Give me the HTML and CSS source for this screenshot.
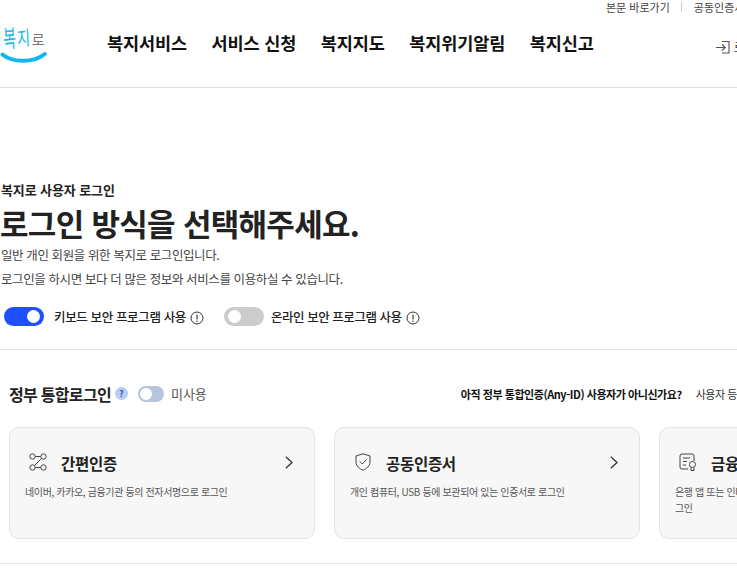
FILE: index.html
```html
<!DOCTYPE html>
<html lang="ko">
<head>
<meta charset="utf-8">
<title>복지로 로그인</title>
<link rel="stylesheet" href="styles.css">
</head>
<body>
<div class="page">
  <header class="header">
    <div class="util">
      <a class="util-link">본문 바로가기</a>
      <span class="util-sep"></span>
      <a class="util-link">공동인증서 관리</a>
    </div>
    <div class="gnb">
      <div class="logo">
        <div class="logo-text"><span class="lg1">복</span><span class="lg2">지</span><span class="lg3">로</span></div>
        <svg class="logo-smile" width="47" height="15" viewBox="0 0 47 15"><path d="M2.500 3.500C12 11.500 33 12.500 44.800 3" fill="none" stroke="#12b7f0" stroke-width="4" stroke-linecap="round"/></svg>
      </div>
      <nav class="nav">
        <a>복지서비스</a><a>서비스 신청</a><a>복지지도</a><a>복지위기알림</a><a>복지신고</a>
      </nav>
      <a class="login">
        <svg width="14" height="14" viewBox="0 0 14 14" fill="none" stroke="#555" stroke-width="1.100"><path d="M0 7.500H9M6 4.500L9.300 7.500L6 10.500M6 1.500H13V13H6"/></svg>
        <span>로그인</span>
      </a>
    </div>
  </header>
  <main class="main">
    <section class="intro">
      <p class="eyebrow">복지로 사용자 로그인</p>
      <h1 class="title">로그인 방식을 선택해주세요.</h1>
      <p class="desc">일반 개인 회원을 위한 복지로 로그인입니다.</p>
      <p class="desc desc-2">로그인을 하시면 보다 더 많은 정보와 서비스를 이용하실 수 있습니다.</p>
      <div class="options">
        <div class="option">
          <span class="switch on"></span><span class="opt-label">키보드 보안 프로그램 사용</span>
          <svg class="info" width="14" height="14" viewBox="0 0 14 14"><circle cx="7" cy="7" r="6" fill="none" stroke="#333"/><path d="M7 3.500V8.500M7 9.500V10.800" stroke="#333" stroke-width="1.100"/></svg>
        </div>
        <div class="option option-2">
          <span class="switch off"></span><span class="opt-label">온라인 보안 프로그램 사용</span>
          <svg class="info" width="14" height="14" viewBox="0 0 14 14"><circle cx="7" cy="7" r="6" fill="none" stroke="#333"/><path d="M7 3.500V8.500M7 9.500V10.800" stroke="#333" stroke-width="1.100"/></svg>
        </div>
      </div>
    </section>
    <section class="gov">
      <div class="gov-head">
        <div class="gov-left">
          <h2 class="gov-title">정부 통합로그인</h2>
          <span class="help">?</span>
          <span class="switch small"></span>
          <span class="unused">미사용</span>
        </div>
        <div class="gov-right">
          <strong>아직 정부 통합인증(Any-ID) 사용자가 아니신가요?</strong>
          <span class="register">사용자 등록하기</span>
        </div>
      </div>
      <div class="cards">
        <article class="card">
          <div class="card-head">
            <svg class="card-icon" width="18" height="18" viewBox="0 0 18 18" fill="none" stroke="#444"><circle cx="3.500" cy="3.500" r="2.700"/><circle cx="14.500" cy="3.500" r="2.700"/><circle cx="3.500" cy="14.500" r="2.700"/><circle cx="14.500" cy="14.500" r="2.700"/><path d="M6.200 3.500H11.800M6.200 14.500H11.800M12.500 5.500L5.500 12.500"/></svg>
            <h3>간편인증</h3>
            <svg class="chev" width="8" height="13" viewBox="0 0 8 13" fill="none" stroke="#333" stroke-width="1.300"><path d="M.8 .8L7 6.500L.8 12.200"/></svg>
          </div>
          <p>네이버, 카카오, 금융기관 등의 전자서명으로 로그인</p>
        </article>
        <article class="card">
          <div class="card-head">
            <svg class="card-icon" width="18" height="18" viewBox="0 0 16 18" fill="none" stroke="#444"><path d="M8 .8L15 3V9C15 13 11.500 15.800 8 17.200C4.500 15.800 1 13 1 9V3Z"/><path d="M4.800 8.500L7.300 11L11.500 6.500"/></svg>
            <h3>공동인증서</h3>
            <svg class="chev" width="8" height="13" viewBox="0 0 8 13" fill="none" stroke="#333" stroke-width="1.300"><path d="M.8 .8L7 6.500L.8 12.200"/></svg>
          </div>
          <p>개인 컴퓨터, USB 등에 보관되어 있는 인증서로 로그인</p>
        </article>
        <article class="card">
          <div class="card-head">
            <svg class="card-icon" width="18" height="18" viewBox="0 0 18 18" fill="none" stroke="#444"><path d="M9 16H3A2 2 0 0 1 1 14V3A2 2 0 0 1 3 1H13A2 2 0 0 1 15 3V8"/><path d="M4 5H11M4 8.500H8M4 12H7"/><circle cx="13.500" cy="11.500" r="3"/><path d="M12 14.500V17.500H15V14.500"/></svg>
            <h3>금융인증서</h3>
            <svg class="chev" width="8" height="13" viewBox="0 0 8 13" fill="none" stroke="#333" stroke-width="1.300"><path d="M.8 .8L7 6.500L.8 12.200"/></svg>
          </div>
          <p>은행 앱 또는 인터넷뱅킹 등에서 발급받은 금융인증서를 이용하여 로그인</p>
        </article>
      </div>
    </section>
    <div class="bottom-rule"></div>
  </main>
</div>
</body>
</html>
```
FILE: styles.css
```css
* { box-sizing: border-box; }
html, body { margin: 0; padding: 0; background: #fff; overflow: hidden; height: 100%; }
body { font-family: "Noto Sans CJK KR", "Noto Sans", sans-serif; color: #222; }
h1, h2, h3, p { margin: 0; }
.page { width: 1000px; }
.header { height: 88px; border-bottom: 1px solid #ddd; display: flex; flex-direction: column; }
.util { display: flex; align-items: center; height: 14px; margin-left: 606px; font-size: 11px; color: #444; white-space: nowrap; }
.util-sep { width: 1px; height: 10px; background: #ccc; margin: 0 12px 0 11px; }
.gnb { display: flex; align-items: flex-start; }
.logo { position: relative; width: 107px; height: 60px; flex: none; }
.logo-text { position: absolute; left: 3px; top: 14px; display: flex; font-size: 14px; line-height: 18px; font-weight: 400; white-space: nowrap; }
.lg1 { color: #12b7f0; transform: scale(1, 1.750) rotate(-4deg); }
.lg2 { color: #12b7f0; transform: scale(1, 1.400) rotate(-4deg); margin-left: 1px; }
.lg3 { color: #777; transform: translateY(2px); margin-left: 2px; }
.logo-smile { position: absolute; left: 0; top: 37px; }
.nav { display: flex; gap: 24.500px; padding-top: 16px; font-size: 17.500px; line-height: 26px; font-weight: 700; color: #111; white-space: nowrap; letter-spacing: -.1px; }
.login { display: flex; align-items: center; gap: 4px; margin-left: 122px; padding-top: 24px; font-size: 12px; color: #333; white-space: nowrap; }
.main { padding-top: 93px; }
.eyebrow { font-size: 13px; line-height: 18px; font-weight: 700; letter-spacing: -.1px; color: #222; padding-left: 1px; }
.title { font-size: 31px; line-height: 40px; font-weight: 700; letter-spacing: -.7px; color: #222; margin-top: 4px; }
.desc { font-size: 12.500px; line-height: 18px; letter-spacing: -.4px; color: #444; margin-top: 3px; padding-left: 1px; }
.desc-2 { margin-top: 6px; }
.options { display: flex; align-items: center; padding: 18px 0 22px 4px; height: 61px; }
.option { display: flex; align-items: center; }
.option-2 { margin-left: 20px; }
.switch { display: block; position: relative; width: 40px; height: 19px; border-radius: 10px; flex: none; }
.switch::after { content: ""; position: absolute; top: 3px; width: 13px; height: 13px; border-radius: 50%; background: #fff; }
.switch.on { background: #1f4fff; }
.switch.on::after { right: 4px; }
.switch.off { background: #ccc; }
.switch.off::after { left: 4px; }
.opt-label { margin-left: 10px; font-size: 12.500px; line-height: 18px; font-weight: 500; letter-spacing: -.36px; color: #222; white-space: nowrap; }
.option-2 .opt-label { margin-left: 7px; letter-spacing: -.45px; }
.info { margin-left: 4px; margin-top: 2px; }
.gov { border-top: 1px solid #e2e2e2; padding: 0 0 0 9px; }
.gov-head { display: flex; align-items: center; height: 77px; padding-top: 10px; }
.gov-left { display: flex; align-items: center; }
.gov-title { font-size: 16px; line-height: 24px; font-weight: 700; color: #222; letter-spacing: -.7px; white-space: nowrap; }
.help { width: 13px; height: 13px; margin-left: 4px; border-radius: 50%; background: #b5cdf5; color: #3a5aa8; font-size: 9px; line-height: 13px; font-weight: 700; text-align: center; }
.switch.small { width: 26px; height: 16px; margin-left: 10px; background: #b6c4dc; }
.switch.small::after { left: 2px; top: 2px; width: 12px; height: 12px; }
.unused { margin-left: 7px; font-size: 13px; line-height: 18px; color: #555; white-space: nowrap; }
.gov-right { display: flex; margin-left: 254px; gap: 14px; font-size: 11px; line-height: 16px; white-space: nowrap; letter-spacing: -.45px; }
.gov-right strong { font-weight: 700; color: #111; }
.register { color: #333; }
.cards { display: flex; gap: 19px; }
.card { flex: none; width: 306px; height: 112px; border: 1px solid #e4e4e4; border-radius: 10px; background: #f7f7f7; padding: 20px 15px 15px; }
.card-head { display: flex; align-items: center; height: 28px; }
.card-icon { flex: none; margin-left: 4px; }
.card-head h3 { font-size: 15.500px; line-height: 24px; font-weight: 700; color: #222; letter-spacing: -.3px; margin-left: 14px; padding-top: 2px; flex: 1; }
.chev { flex: none; margin-right: 6px; }
.card p { margin-top: 8px; font-size: 10px; line-height: 16px; color: #555; letter-spacing: -.37px; word-break: break-all; }
.bottom-rule { height: 1px; background: #e6e6e6; margin-top: 24px; }
```
